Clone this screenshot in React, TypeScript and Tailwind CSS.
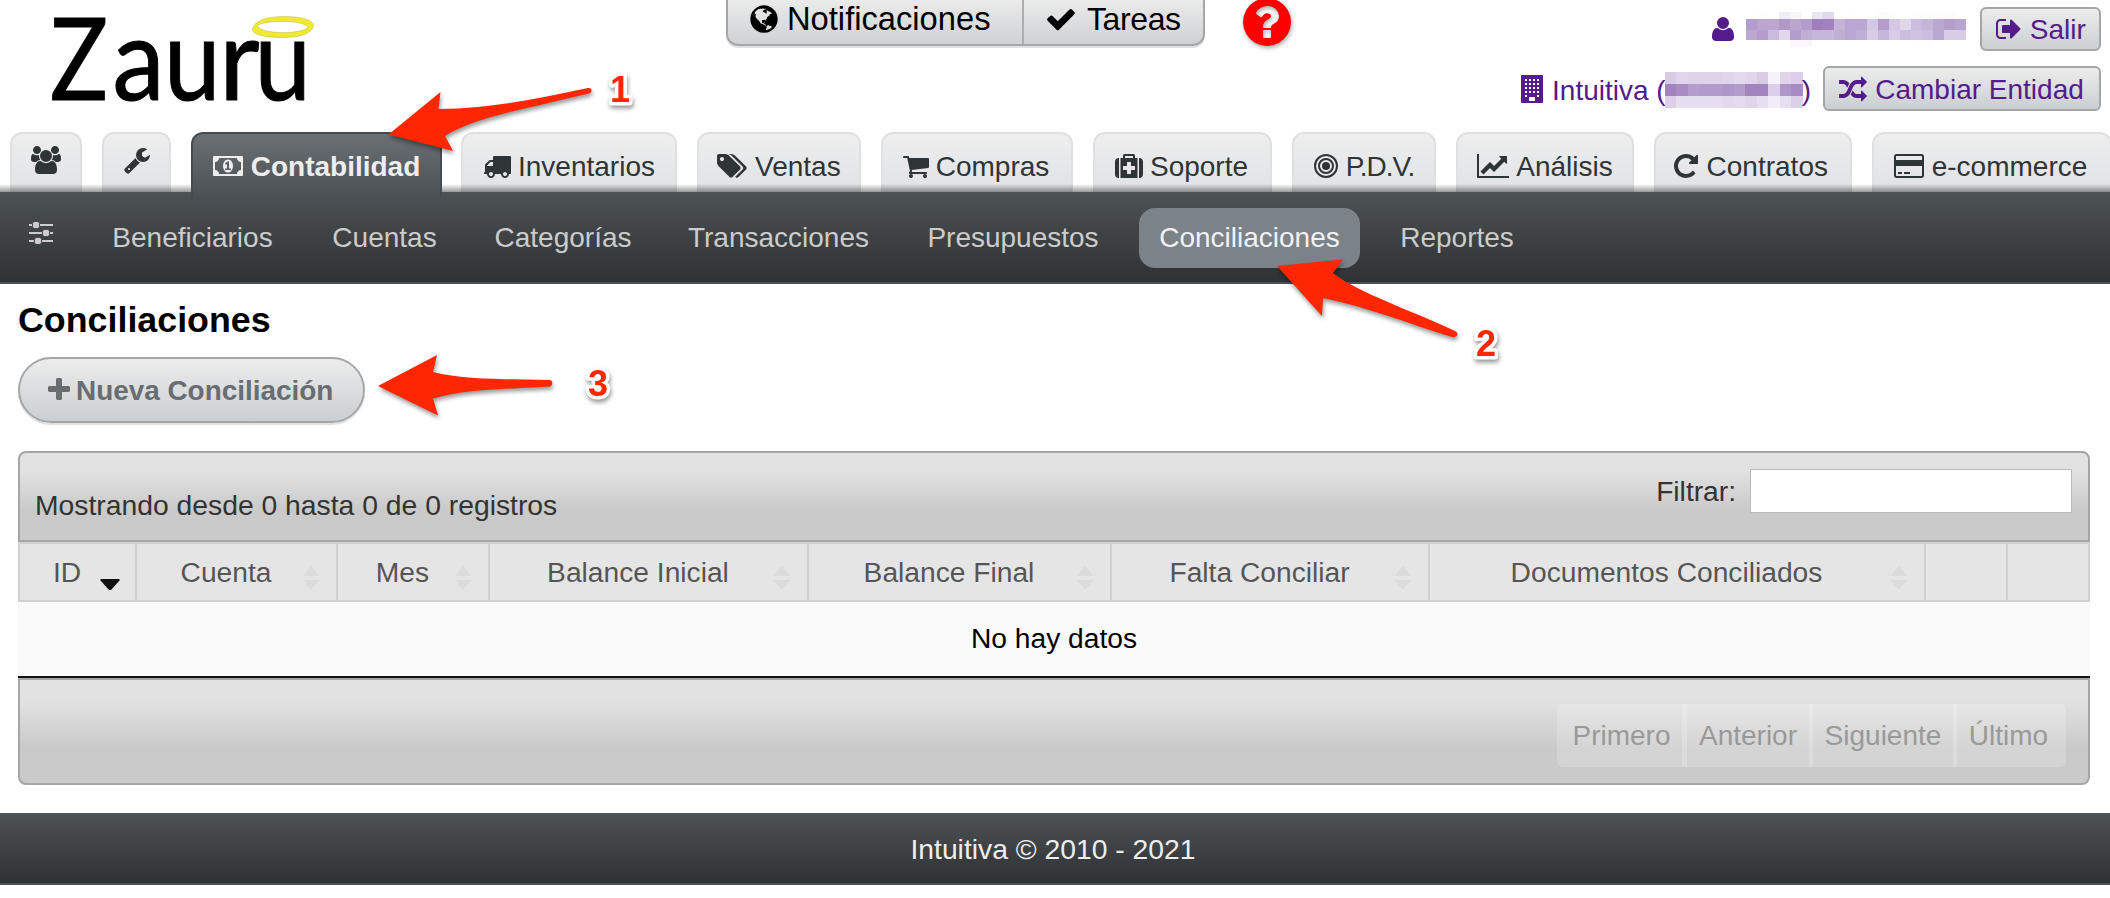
import type { ReactNode } from 'react';
import clsx from 'clsx';

interface GlyphProps {
  d: string;
  width?: number;
  className?: string;
}

function Glyph({ d, width = 1792, className = 'h-7' }: GlyphProps) {
  return (
    <svg viewBox={`0 0 ${width} 1792`} fill="currentColor" className={clsx('shrink-0 overflow-visible', className)}>
      <path d={d} />
    </svg>
  );
}

const glyphs = {
  users:
    'M593 896q-162 5-265 128h-134q-82 0-138-40.5t-56-118.5q0-353 124-353 6 0 43.5 21t97.5 42.5 119 21.5q67 0 133-23-5 37-5 66 0 139 81 256zm1071 637q0 120-73 189.5t-194 69.5h-874q-121 0-194-69.5t-73-189.5q0-53 3.5-103.5t14-109 26.5-108.5 43-97.5 62-81 85.5-53.5 111.5-20q10 0 43 21.5t73 48 107 48 135 21.5 135-21.5 107-48 73-48 43-21.5q61 0 111.5 20t85.5 53.5 62 81 43 97.5 26.5 108.5 14 109 3.5 103.5zm-1024-1277q0 106-75 181t-181 75-181-75-75-181 75-181 181-75 181 75 75 181zm704 384q0 159-112.5 271.5t-271.5 112.5-271.5-112.5-112.5-271.5 112.5-271.5 271.5-112.5 271.5 112.5 112.5 271.5zm576 225q0 78-56 118.5t-138 40.5h-134q-103-123-265-128 81-117 81-256 0-29-5-66 66 23 133 23 59 0 119-21.5t97.5-42.5 43.5-21q124 0 124 353zm-128-609q0 106-75 181t-181 75-181-75-75-181 75-181 181-75 181 75 75 181z',
  wrench:
    'M448 1472q0-26-19-45t-45-19-45 19-19 45 19 45 45 19 45-19 19-45zm644-420l-682 682q-37 37-90 37-52 0-91-37l-106-108q-38-36-38-90 0-53 38-91l681-681q39 98 114.5 173.5t173.5 114.5zm634-435q0 39-23 106-47 134-164.5 217.5t-258.5 83.5q-185 0-316.5-131.5t-131.5-316.5 131.5-316.5 316.5-131.5q58 0 121.5 16.5t107.5 46.5q16 11 16 28t-16 28l-293 169v224l193 107q5-3 79-48.5t135.5-81 70.5-35.5q15 0 23.5 10t8.5 25z',
  money:
    'M768 1152h384v-96h-128v-448h-114l-148 137 77 80q42-37 55-57h2v288h-128v96zm512-256q0 70-21 142t-59.5 134-101.5 101-138 39-138-39-101.5-101-59.5-134-21-142 21-142 59.5-134 101.5-101 138-39 138 39 101.5 101 59.5 134 21 142zm512 256v-512q-106 0-181-75t-75-181h-1152q0 106-75 181t-181 75v512q106 0 181 75t75 181h1152q0-106 75-181t181-75zm128-832v1152q0 26-19 45t-45 19h-1792q-26 0-45-19t-19-45v-1152q0-26 19-45t45-19h1792q26 0 45 19t19 45z',
  truck:
    'M640 1408q0-52-38-90t-90-38-90 38-38 90 38 90 90 38 90-38 38-90zm-384-512h384v-256h-158q-13 0-22 9l-195 195q-9 9-9 22v30zm1280 512q0-52-38-90t-90-38-90 38-38 90 38 90 90 38 90-38 38-90zm256-1088v1024q0 15-4 26.5t-13.5 18.5-16.5 11.5-23.5 6-22.5 2-25.5 0-22.5-.5q0 106-75 181t-181 75-181-75-75-181h-384q0 106-75 181t-181 75-181-75-75-181h-64q-3 0-22.5.5t-25.5 0-22.5-2-23.5-6-16.5-11.5-13.5-18.5-4-26.5q0-26 19-45t45-19v-320q0-8-.5-35t0-38 2.5-34.5 6.5-37 14-30.5 22.5-30l198-198q19-19 50.5-32t58.5-13h160v-192q0-26 19-45t45-19h1024q26 0 45 19t19 45z',
  tags: 'M384 448q0-53-37.5-90.5t-90.5-37.5-90.5 37.5-37.5 90.5 37.5 90.5 90.5 37.5 90.5-37.5 37.5-90.5zm1067 576q0 53-37 90l-491 492q-39 37-91 37-53 0-90-37l-715-716q-38-37-64.5-101t-26.5-117v-416q0-52 38-90t90-38h416q53 0 117 26.5t102 64.5l715 714q37 39 37 91zm384 0q0 53-37 90l-491 492q-39 37-91 37-36 0-59-14t-53-45l470-470q37-37 37-90 0-52-37-91l-715-714q-38-38-102-64.5t-117-26.5h224q53 0 117 26.5t102 64.5l715 714q37 39 37 91z',
  cart: 'M704 1536q0 52-38 90t-90 38-90-38-38-90 38-90 90-38 90 38 38 90zm896 0q0 52-38 90t-90 38-90-38-38-90 38-90 90-38 90 38 38 90zm128-1088v512q0 24-16.5 42.5t-40.5 21.5l-1044 122q13 60 13 70 0 16-24 64h920q26 0 45 19t19 45-19 45-45 19h-1024q-26 0-45-19t-19-45q0-11 8-31.5t16-36 21.5-40 15.5-29.5l-177-823h-204q-26 0-45-19t-19-45 19-45 45-19h256q16 0 28.5 6.5t19.5 15.5 13 24.5 8 26 5.5 29.5 4.5 26h1201q26 0 45 19t19 45z',
  medkit:
    'M1280 1120v-192q0-14-9-23t-23-9h-224v-224q0-14-9-23t-23-9h-192q-14 0-23 9t-9 23v224h-224q-14 0-23 9t-9 23v192q0 14 9 23t23 9h224v224q0 14 9 23t23 9h192q14 0 23-9t9-23v-224h224q14 0 23-9t9-23zm-640-736h512v-128h-512v128zm-384 0v1280h-32q-92 0-158-66t-66-158v-832q0-92 66-158t158-66h32zm1184 0v1280h-1088v-1280h160v-160q0-40 28-68t68-28h576q40 0 68 28t28 68v160h160zm352 224v832q0 92-66 158t-158 66h-32v-1280h32q92 0 158 66t66 158z',
  chart:
    'M2048 1536v128h-2048v-1536h128v1408h1920zm-128-1248v435q0 21-19.5 29.5t-35.5-7.5l-121-121-633 633q-10 10-23 10t-23-10l-233-233-416 416-192-192 585-585q10-10 23-10t23 10l233 233 464-464-121-121q-16-16-7.5-35.5t29.5-19.5h435q14 0 23 9t9 23z',
  repeat:
    'M1664 256v448q0 26-19 45t-45 19h-448q-42 0-59-40-17-39 14-69l138-138q-148-137-349-137-104 0-198.5 40.5t-163.5 109.5-109.5 163.5-40.5 198.5 40.5 198.5 109.5 163.5 163.5 109.5 198.5 40.5q119 0 225-52t179-147q7-10 23-12 15 0 25 9l137 138q9 8 9.5 20.5t-7.5 22.5q-109 132-264 204.5t-327 72.5q-156 0-298-61t-245-164-164-245-61-298 61-298 164-245 245-164 298-61q147 0 284.5 55.5t244.5 156.5l130-129q29-31 70-14 39 17 39 59z',
  card: 'M1760 128q66 0 113 47t47 113v1216q0 66-47 113t-113 47h-1600q-66 0-113-47t-47-113v-1216q0-66 47-113t113-47h1600zm-1600 128q-13 0-22.5 9.5t-9.5 22.5v224h1664v-224q0-13-9.5-22.5t-22.5-9.5h-1600zm1600 1280q13 0 22.5-9.5t9.5-22.5v-608h-1664v608q0 13 9.5 22.5t22.5 9.5h1600zm-1504-128v-128h256v128h-256zm384 0v-128h384v128h-384z',
  user: 'M1600 1405q0 120-73 189.5t-194 69.5h-874q-121 0-194-69.5t-73-189.5q0-53 3.5-103.5t14-109 26.5-108.5 43-97.5 62-81 85.5-53.5 111.5-20q9 0 42 21.5t74.5 48 108 48 133.5 21.5 133.5-21.5 108-48 74.5-48 42-21.5q61 0 111.5 20t85.5 53.5 62 81 43 97.5 26.5 108.5 14 109 3.5 103.5zm-320-893q0 159-112.5 271.5t-271.5 112.5-271.5-112.5-112.5-271.5 112.5-271.5 271.5-112.5 271.5 112.5 112.5 271.5z',
  signOut:
    'M704 1440q0 4 1 20t.5 26.5-3 23.5-10 19.5-20.5 6.5h-320q-119 0-203.5-84.5t-84.5-203.5v-704q0-119 84.5-203.5t203.5-84.5h320q13 0 22.5 9.5t9.5 22.5q0 4 1 20t.5 26.5-3 23.5-10 19.5-20.5 6.5h-320q-66 0-113 47t-47 113v704q0 66 47 113t113 47h312l11.5 1 11.5 3 8 5.5 7 9 2 13.5zm928-544q0 26-19 45l-544 544q-19 19-45 19t-45-19-19-45v-288h-448q-26 0-45-19t-19-45v-384q0-26 19-45t45-19h448v-288q0-26 19-45t45-19 45 19l544 544q19 19 19 45z',
  random:
    'M666 481q-60 92-137 273-22-45-37-72.5t-40.5-63.5-51-56.5-63-35-81.5-14.5h-224q-14 0-23-9t-9-23v-192q0-14 9-23t23-9h224q250 0 410 225zm1126 799q0 14-9 23l-320 320q-9 9-23 9-13 0-22.5-9.5t-9.5-22.5v-192q-32 0-85 .5t-81 1-73-1-71-5-64-10.5-63-18.5-58-28.5-59-40-55-53.5-56-69.5q59-93 136-273 22 45 37 72.5t40.5 63.5 51 56.5 63 35 81.5 14.5h256v-192q0-14 9-23t23-9q12 0 24 10l319 319q9 9 9 23zm0-896q0 14-9 23l-320 320q-9 9-23 9-13 0-22.5-9.5t-9.5-22.5v-192h-256q-48 0-87 15t-69 45-51 61.5-45 77.5q-32 62-78 171-29 66-49.5 111t-54 105-64 100-74 83-90 68.5-106.5 42-128 16.5h-224q-14 0-23-9t-9-23v-192q0-14 9-23t23-9h224q48 0 87-15t69-45 51-61.5 45-77.5q32-62 78-171 29-66 49.5-111t54-105 64-100 74-83 90-68.5 106.5-42 128-16.5h256v-192q0-14 9-23t23-9q12 0 24 10l319 319q9 9 9 23z',
  check:
    'M1671 566q0 40-28 68l-724 724-136 136q-28 28-68 28t-68-28l-136-136-362-362q-28-28-28-68t28-68l136-136q28-28 68-28t68 28l294 295 656-657q28-28 68-28t68 28l136 136q28 28 28 68z',
  plus: 'M1600 736v192q0 40-28 68t-68 28h-416v416q0 40-28 68t-68 28h-192q-40 0-68-28t-28-68v-416h-416q-40 0-68-28t-28-68v-192q0-40 28-68t68-28h416v-416q0-40 28-68t68-28h192q40 0 68 28t28 68v416h416q40 0 68 28t28 68z',
  question:
    'M1024 1376v-192q0-14-9-23t-23-9h-192q-14 0-23 9t-9 23v192q0 14 9 23t23 9h192q14 0 23-9t9-23zm256-672q0-88-55.5-163t-138.5-116-170-41q-243 0-371 213-15 24 8 42l132 100q7 6 19 6 16 0 25-12 53-68 86-92 34-24 86-24 48 0 85.5 26t37.5 59q0 38-20 61t-68 45q-63 28-115.5 86.5t-52.5 125.5v36q0 14 9 23t23 9h192q14 0 23-9t9-23q0-19 21.5-49.5t54.5-49.5q32-18 49-28.5t46-35 44.5-48 28-60.5 12.5-81zm384 192q0 209-103 385.5t-279.5 279.5-385.5 103-385.5-103-279.5-279.5-103-385.5 103-385.5 279.5-279.5 385.5-103 385.5 103 279.5 279.5 103 385.5z',
  globe:
    'M896 128q209 0 385.5 103t279.5 279.5 103 385.5-103 385.5-279.5 279.5-385.5 103-385.5-103-279.5-279.5-103-385.5 103-385.5 279.5-279.5 385.5-103zm274 521q-2 1-9.5 9.5t-13.5 9.5q2 0 4.5-5t5-11 3.5-7q6-7 22-15 14-6 52-12 34-8 51 11-2-2 9.5-13t14.5-12q3-2 15-4.5t15-7.5l2-22q-12 1-17.5-7t-6.5-21q0 2-6 8 0-7-4.5-8t-11.5 1-9 1q-10-3-15-7.5t-8-16.5-4-15q-2-5-9.5-11t-9.5-10q-1-2-2.5-5.5t-3-6.5-4-5.5-5.5-2.5-7 5-7.5 10-4.5 5q-3-2-6-1.5t-4.5 1-4.5 3-5 3.5q-3 2-8.5 3t-8.5 2q15-5-1-11-10-4-16-3 9-4 7.5-12t-8.5-14h5q-1-4-8.5-8.5t-17.5-8.5-13-6q-8-5-34-9.5t-33-.5q-5 6-4.5 10.5t4 14 3.5 12.5q1 6-5.5 13t-6.5 12q0 7 14 15.5t10 21.5q-3 8-16 16t-16 12q-5 8-1.5 18.5t10.5 16.5q2 2 1.5 4t-3.5 4.5-5.5 4-6.5 3.5l-3 2q-11 5-20.5-6t-13.5-26q-7-25-16-30-23-8-29 1-5-13-41-26-25-9-58-4 6-1 0-15-7-15-19-12 3-6 4-17.5t1-13.5q3-13 12-23 1-1 7-8.5t9.5-13.5.5-6q35 4 50-11 5-5 11.5-17t10.5-17q9-6 14-5.5t14.5 5.5 14.5 5q14 1 15.5-11t-7.5-20q12 1 3-17-5-7-8-9-12-4-27 5-8 4 2 8-1-1-9.5 10.5t-16.5 17.5-16-5q-1-1-5.5-13.5t-9.5-13.5q-8 0-16 15 3-8-11-15t-24-8q19-12-8-27-7-4-20.5-5t-19.5 4q-5 7-5.5 11.5t5 8 10.5 5.5 11.5 4 8.5 3q14 10 8 14-2 1-8.5 3.5t-11.5 4.5-6 4q-3 4 0 14t-2 14q-5-5-9-17.5t-7-16.5q7 9-25 6l-10-1q-4 0-16 2t-20.5 1-13.5-8q-4-8 0-20 1-4 4-2-4-3-11-9.5t-10-8.5q-46 15-94 41 6 1 12-1 5-2 13-6.5t10-5.5q34-14 42-7l5-5q14 16 20 25-7-4-30-1-20 6-22 12 7 12 5 18-4-3-11.5-10t-14.5-11-15-5q-16 0-22 1-146 80-235 222 7 7 12 8 4 1 5 9t2.500 11 11.500-3q9 8 3 19 1-1 44 27 19 17 21 21 3 11-10 18-1-2-9-9t-9-4q-3 5 .5 18.500t10.500 12.500q-7 0-9.500 16t-2.500 35.500-1 23.500l2 1q-3 12 5.500 34.500t21.500 19.500q-13 3 20 43 6 8 8 9 3 2 12 7.500t15 10 10 10.500q4 5 10 22.500t14 23.500q-2 6 9.500 20t10.500 23q-1 0-2.500 1t-2.500 1q3 7 15.500 14t15.500 13q1 3 2 10t3 11 8 2q2-20-24-62-15-25-17-29-3-5-5.500-15.500t-4.500-14.500q2 0 6 1.500t8.500 3.500 7.500 4 2 3q-3 7 2 17.500t12 18.500 17 19 12 13q6 6 14 19.500t0 13.500q9 0 20 10.500t17 19.500q5 8 8 26t5 24q2 7 8.500 13.500t12.500 9.500l16 8 13 7q5 2 18.500 10.500t21.500 11.500q10 4 16 4t14.500-2.500 13.500-3.500q15-2 29 15t21 21q36 19 55 11-2 1 .5 7.500t8 15.500 9 14.500 5.500 8.500q5 6 18 15t18 15q6-4 7-9-3 8 7 20t18 10q14-3 14-32-31 15-49-18 0-1-2.500-5.500t-4-8.500-2.500-8.500 0-7.500 5-3q9 0 10-3.500t-2-12.500-4-13q-1-8-11-20t-12-15q-5 9-16 8t-16-9q0 1-1.500 5.500t-1.500 6.500q-13 0-15-1 1-3 2.500-17.500t3.500-22.500q1-4 5.500-12t7.500-14.500 4-12.500-4.500-9.500-17.500-2.500q-19 1-26 20-1 3-3 10.500t-5 11.500-9 7q-7 3-24 2t-24-5q-13-8-22.500-29t-9.500-37q0-10 2.500-26.500t3-25-5.500-24.500q3-2 9-9.500t10-10.500q2-1 4.500-1.500t4.500 0 4-1.500 3-6q-1-1-4-3-3-3-4-3 7 3 28.500-1.500t27.500 1.500q15 11 22-2 0-1-2.500-9.500t-.5-13.500q5 27 29 9 3 3 15.500 5t17.500 5q3 2 7 5.500t5.500 4.500 5-.5 8.500-6.500q10 14 12 24 11 40 19 44 7 3 11 2t4.500-9.500 0-14-1.500-12.500l-1-8v-18l-1-8q-15-3-18.500-12t1.500-18.500 15-18.500q1-1 8-3.500t15.500-6.500 12.500-8q21-19 15-35 7 0 11-9-1 0-5-3t-7.500-5-4.500-2q9-5 2-16 5-3 7.500-11t7.500-10q9 12 21 2 8-8 1-16 5-7 20.500-10.500t18.500-9.500q7 2 8-2t1-12 3-12q4-5 15-9t13-5l17-11q3-4 0-4 18 2 31-11 10-11-6-20 3-6-3-9.500t-15-5.500q3-1 11.500-.5t10.500-1.500q15-10-7-16-17-5-43 12zm-163 877q206-36 351-189-3-3-12.500-4.500t-12.500-3.500q-18-7-24-8 1-7-2.500-13t-8-9-12.500-8-11-7q-2-2-7-6t-7-5.500-7.500-4.500-8.500-2-10 1l-3 1q-3 1-5.500 2.500t-5.500 3-4 3 0 2.500q-21-17-36-22-5-1-11-5.500t-10.500-7-10-1.500-11.500 7q-5 5-6 15t-2 13q-7-5 0-17.500t2-18.500q-3-6-10.500-4.500t-12 4.500-11.500 8.500-9 6.500-8.500 5.500-8.500 7.500q-3 4-6 12t-5 11q-2-4-11.500-6.500t-9.500-5.500q2 10 4 35t5 38q7 31-12 48-27 25-29 40-4 22 12 26 0 7-8 20.500t-7 21.500q0 6 2 16z',
};

function Bullseye() {
  return (
    <svg viewBox="128 0 1536 1792" className="h-7 shrink-0" fill="none" stroke="currentColor" strokeWidth="128">
      <circle cx="896" cy="896" r="256" fill="currentColor" stroke="none" />
      <circle cx="896" cy="896" r="448" />
      <circle cx="896" cy="896" r="704" />
    </svg>
  );
}

function Building() {
  return (
    <svg viewBox="0 0 22 28" className="h-7 w-[22px] shrink-0">
      <rect width="22" height="28" rx="1" fill="#551a8b" />
      {[4, 8, 12, 16, 20].map((y) =>
        [4, 8, 12, 16].map((x) =>
          y === 20 && (x === 8 || x === 12) ? null : (
            <rect key={`${x}-${y}`} x={x} y={y} width="2" height="2" fill="#fff" />
          ),
        ),
      )}
      <rect x="8" y="22" width="6" height="4" fill="#fff" />
    </svg>
  );
}

function Sliders() {
  return (
    <svg viewBox="0 0 24 22" className="h-[22px] w-6 shrink-0" fill="#ccc">
      <path d="M0 2h24v2H0zM0 10h24v2H0zM0 18h24v2H0z" />
      <g stroke="#42464a" strokeWidth="1">
        <rect x="3.5" y="-.5" width="7" height="7" rx="2" />
        <rect x="13.5" y="7.5" width="7" height="7" rx="2" />
        <rect x="5.5" y="15.5" width="7" height="7" rx="2" />
      </g>
    </svg>
  );
}

function Logo() {
  return (
    <svg viewBox="0 0 340 120" className="h-[120px] w-[340px] shrink-0">
      <g fontFamily="Lato, sans-serif" fontSize="115" fill="#000" stroke="#000" strokeWidth="1">
        <text transform="translate(50 99.5) scale(.84 1)">Z</text>
        <text transform="translate(112.5 99.5) scale(.91 1)">a</text>
        <text transform="translate(164 99.5) scale(.88 1)">u</text>
        <text transform="translate(219 99.5) scale(.97 1)">r</text>
        <text transform="translate(254.500 99.5) scale(.88 1)">u</text>
      </g>
      <path
        fill="#f1ea2b"
        stroke="#a8a45a"
        strokeOpacity=".5"
        strokeWidth=".8"
        fillRule="evenodd"
        d="M252.500 30C253 19 272 16.500 284 16.500c16 0 28 3 29.500 8.500-1 9-14 12.500-31 12.500-17 0-29-2.500-30-7.500zM257.500 26c2 4 12 6.500 25 6.500 12 0 21-1.500 25.500-5-2-4-12-6-25-6-14 0-23 1.500-25.500 4.500z"
      />
    </svg>
  );
}

interface Tab {
  label: string;
  size: string;
  icon: ReactNode;
  active?: boolean;
}

const tabs: Tab[] = [
  { label: 'Contabilidad', size: 'w-[251px] gap-[8px]', icon: <Glyph d={glyphs.money} width={1920} />, active: true },
  { label: 'Inventarios', size: 'w-[216px] gap-[7px] -ml-px', icon: <Glyph d={glyphs.truck} /> },
  { label: 'Ventas', size: 'w-[164px] gap-[8px] pl-px', icon: <Glyph d={glyphs.tags} width={1835} /> },
  { label: 'Compras', size: 'w-[192px] gap-[6px] pr-[3px]', icon: <Glyph d={glyphs.cart} /> },
  { label: 'Soporte', size: 'w-[179px] gap-[7px] pr-[2px]', icon: <Glyph d={glyphs.medkit} /> },
  { label: 'P.D.V.', size: 'w-[144px] gap-[8px] tracking-[-1px]', icon: <Bullseye /> },
  { label: 'Análisis', size: 'w-[178px] gap-[7px]', icon: <Glyph d={glyphs.chart} width={2048} /> },
  { label: 'Contratos', size: 'w-[198px] gap-[8px] pr-[6px]', icon: <Glyph d={glyphs.repeat} width={1700} /> },
  { label: 'e-commerce', size: 'w-[240px] gap-[8px] pr-[3px]', icon: <Glyph d={glyphs.card} width={1920} /> },
];

const sections = [
  { label: 'Beneficiarios', width: 'w-[201px]' },
  { label: 'Cuentas', width: 'w-[143px]' },
  { label: 'Categorías', width: 'w-[174px]' },
  { label: 'Transacciones', width: 'w-[217px]' },
  { label: 'Presupuestos', width: 'w-[212px]' },
  { label: 'Conciliaciones', width: 'w-[221px]', active: true },
  { label: 'Reportes', width: 'w-[154px]' },
];

const columns = [
  { label: 'ID', width: 'w-[117px]', sorted: true },
  { label: 'Cuenta', width: 'w-[201px]' },
  { label: 'Mes', width: 'w-[152px]' },
  { label: 'Balance Inicial', width: 'w-[319px]' },
  { label: 'Balance Final', width: 'w-[303px]' },
  { label: 'Falta Conciliar', width: 'w-[318px]' },
  { label: 'Documentos Conciliados', width: 'w-[496px]' },
  { label: '', width: 'w-[82px]' },
  { label: '', width: 'w-[82px]' },
];

const nameMosaic = [
  '#fff #fdfcfe #fff #f1edf6 #f7f5fa #fff #ece6f2 #e2d9ec #fff #fefefe #fff #fff #fbfafc #fefefe #fff #fdfcfd #fdfcfd #fdfcfd #fdfcfd #fff',
  '#b39dcc #bba6d0 #bba6d0 #b099c9 #bba6d0 #b39dcc #a07dbc #a182be #c4b2d8 #b9a6d2 #b9a6d2 #d4c7e3 #b39dcc #d3c7e3 #e1d7eb #cbbddd #c5b5d8 #baa7d1 #b49fcc #baa7d1',
  '#bda7d1 #b39dcc #cabbdc #e2d8ec #b39dcc #c1aed5 #c6b6d9 #c6b6d9 #c0aed5 #b9a6d2 #c0aed5 #d8cce6 #c6b6d9 #d8cce6 #cbbddd #cfc1df #cbbddd #baa7d1 #d8cce6 #d8cce6',
  '#fff #fff #fff #fff #faf8fb #faf8fb #fff #fff #fff #fff #fff #fff #fff #fff #fff #fefefe #fefefe #fff #fff #fff',
];

const entityMosaic = [
  '#d8cce5 #e0d5ea #ddd2e8 #ddd2e8 #ddd2e8 #dfd4e9 #e2d9ec #e0d5ea #d8cce5 #f5f3f9 #dfd4e9 #dbd0e7',
  '#a283be #aa8cc3 #b29dcb #b19bca #b19bca #ae96c8 #b29dcb #a283be #a283be #dacfe6 #ae96c8 #a88bc2',
  '#dccfe7 #e5deef #e5deef #e5deef #e5deef #e2d9ec #e4dcee #dfd6ea #e6dff0 #f1edf6 #e6dff0 #dccfe7',
];

function Mosaic({ rows, heights }: { rows: string[]; heights: string[] }) {
  return (
    <div className="flex h-full w-full flex-col">
      {rows.map((row, r) => (
        <div key={r} className={clsx('flex w-full', heights[r])}>
          {row.split(' ').map((color, i) => (
            <span key={i} className="flex-1" style={{ backgroundColor: color }} />
          ))}
        </div>
      ))}
    </div>
  );
}

function SmallButton({ children, className }: { children: ReactNode; className: string }) {
  return (
    <button
      className={clsx(
        'flex shrink-0 items-center justify-center rounded-md border-2 border-[#a6a6a6] bg-linear-to-b from-[#ececec] to-[#cbcfd1] whitespace-nowrap',
        className,
      )}
    >
      {children}
    </button>
  );
}

function Header() {
  return (
    <header className="flex h-[132px] items-start">
      <Logo />
      <div className="ml-[386px] flex h-[46px] w-[479px] shrink-0 rounded-b-xl border-x-2 border-b-2 border-[#a6a6a6] bg-linear-to-b from-[#ebebeb] to-[#cfd1d3] leading-8 text-black shadow-[0_2px_0_#e2e2e2]">
        <div className="flex w-[296px] items-start border-r-2 border-[#adadad] pt-[3px] pl-5 text-[32.7px]">
          <Glyph d={glyphs.globe} className="h-8" />
          <span className="ml-[7px]">Notificaciones</span>
        </div>
        <div className="flex items-start pt-[3px] pl-[21px] text-[32px] tracking-[-0.4px]">
          <Glyph d={glyphs.check} className="h-8" />
          <span className="ml-[10px]">Tareas</span>
        </div>
      </div>
      <div className="-mt-1.5 ml-[34px] shrink-0 text-[#fe0000] drop-shadow-[1px_2px_2px_rgba(0,0,0,0.35)]">
        <Glyph d={glyphs.question} className="h-14" />
      </div>
      <div className="mt-[7px] mr-[9px] ml-auto flex flex-col items-end gap-[15px] text-[28px] leading-7 text-[#551a8b]">
        <div className="flex h-11 items-center">
          <Glyph d={glyphs.user} className="mr-[5px] h-7" />
          <div className="mr-[9px] flex h-9 w-[229px] pt-px pr-[5px] pl-1">
            <Mosaic rows={nameMosaic} heights={['h-[7px]', 'h-[11px]', 'h-[11px]', 'h-[7px]']} />
          </div>
          <SmallButton className="h-11 w-[121px] gap-2">
            <Glyph d={glyphs.signOut} width={1700} />
            <span className="pt-0.5">Salir</span>
          </SmallButton>
        </div>
        <div className="flex h-[45px] items-center">
          <Building />
          <span className="ml-[9px] pt-1 whitespace-nowrap">Intuitiva (</span>
          <div className="mt-[3px] -ml-px h-9 w-[138px]">
            <Mosaic rows={entityMosaic} heights={['h-3', 'h-3', 'h-3']} />
          </div>
          <span className="mr-[12px] -ml-px pt-1">)</span>
          <SmallButton className="h-[45px] w-[278px] gap-2 pr-px">
            <Glyph d={glyphs.random} className="mt-0.5 h-7" />
            <span className="pt-0.5">Cambiar Entidad</span>
          </SmallButton>
        </div>
      </div>
    </header>
  );
}

function TabBar() {
  return (
    <nav className="relative flex h-[60px] gap-5 pl-2.5 text-[28px] leading-7 text-[#2f3436]">
      <div className="flex w-[72px] shrink-0 justify-center rounded-t-xl border-2 border-b-0 border-[#dfe1e1] bg-linear-to-b from-[#eeeeee] to-[#e0e2e4] pt-3">
        <Glyph d={glyphs.users} width={1920} />
      </div>
      <div className="flex w-[69px] shrink-0 justify-center rounded-t-xl border-2 border-b-0 border-[#dfe1e1] bg-linear-to-b from-[#eeeeee] to-[#e0e2e4] pt-3">
        <Glyph d={glyphs.wrench} />
      </div>
      {tabs.map((tab) => (
        <div
          key={tab.label}
          className={clsx(
            'flex shrink-0 justify-center rounded-t-xl border-2 border-b-0 bg-linear-to-b pt-[18px] whitespace-nowrap',
            tab.size,
            tab.active
              ? 'z-10 h-[66px] border-[#464b4f] from-[#6b7074] to-[#4b5054] font-bold text-[#eee]'
              : 'border-[#dfe1e1] from-[#eeeeee] to-[#e0e2e4]',
          )}
        >
          {tab.icon}
          <span className="pt-px">{tab.label}</span>
        </div>
      ))}
      <div className="absolute inset-x-0 bottom-0 h-2 bg-linear-to-b from-black/0 to-black/40" />
    </nav>
  );
}

function SectionBar() {
  return (
    <nav className="flex h-[92px] items-start gap-5 border-b-2 border-[#4b5156] bg-linear-to-b from-[#4d5255] to-[#2f3235] pt-4 pl-[29px] text-center text-[28px] leading-7 text-[#ccc]">
      <div className="mr-[19px] pt-3.5">
        <Sliders />
      </div>
      {sections.map((section) => (
        <a
          key={section.label}
          className={clsx('h-[60px] rounded-2xl pt-4', section.width, section.active && 'bg-[#7b8288] text-[#f2f2f2]')}
        >
          {section.label}
        </a>
      ))}
    </nav>
  );
}

function SortMark({ sorted }: { sorted?: boolean }) {
  if (sorted) {
    return (
      <svg viewBox="0 0 20 24" className="absolute right-[15px] bottom-2.5 h-6 w-5">
        <path d="M.5 13h19v1.5L11 24H9L.5 14.5z" fill="#111" />
      </svg>
    );
  }
  return (
    <svg viewBox="0 0 18 24" className="absolute right-[16px] bottom-2.5 h-6 w-[18px]" fill="#dbdbdb">
      <path d="M9 0l8.5 10H.5zM9 24l8.5-10H.5z" />
    </svg>
  );
}

function DataTable() {
  return (
    <div className="mx-[18px] mt-7 w-[2072px] text-[28.2px] leading-7">
      <div className="flex h-[91px] justify-between rounded-t-lg border-2 border-[#a6a6a6] bg-linear-to-b from-[#e2e2e2] from-20% to-[#cacaca] to-65% text-[#333]">
        <div className="pt-[38px] pl-[15px] text-[28.3px]">Mostrando desde 0 hasta 0 de 0 registros</div>
        <label className="flex items-start pt-4 pr-4">
          <span className="pt-2">Filtrar:</span>
          <input className="ml-[14px] h-11 w-[322px] border border-[#bbb] bg-white" />
        </label>
      </div>
      <div className="flex h-[60px] border-y-2 border-l-2 border-[#d0d0d0] bg-[#e5e5e5] text-[#555]">
        {columns.map((column, i) => (
          <div
            key={i}
            className={clsx(
              'relative shrink-0 border-r-2 border-[#d0d0d0] pt-3.5 pr-[21px] text-center whitespace-nowrap',
              column.width,
            )}
          >
            {column.label}
            {column.label && <SortMark sorted={column.sorted} />}
          </div>
        ))}
      </div>
      <div className="h-[76px] border-b-2 border-[#111] bg-[#f9f9f9] pt-[22px] text-center text-black">
        No hay datos
      </div>
      <div className="flex h-[107px] items-start justify-end rounded-b-lg border-2 border-[#a6a6a6] bg-linear-to-b from-[#e2e2e2] from-20% to-[#cacaca] to-65% pt-6 pr-[22px] text-[28px] text-[#999]">
        <div className="flex h-[63px] overflow-hidden rounded-md bg-white/20 text-center leading-[64px]">
          <span className="w-[130px] border-r-[5px] border-white/20 pl-1">Primero</span>
          <span className="w-[126px] border-r-4 border-white/20">Anterior</span>
          <span className="w-[144px] border-r-4 border-white/20">Siguiente</span>
          <span className="w-[109px] pr-1.5">Último</span>
        </div>
      </div>
    </div>
  );
}

// Numbered guide arrows laid over the page
function Callouts() {
  return (
    <svg
      viewBox="0 0 2110 898"
      className="pointer-events-none absolute inset-0 z-20 h-[898px] w-[2110px] drop-shadow-[1px_3px_2px_rgba(0,0,0,0.4)]"
      fill="#ff2600"
    >
      <path d="M388.5 134.5L440.5 92l-2 17C490 109 540 98 588 88c4-.5 5 4 1 5.5C530 108 475 117 445 136l8 15z" />
      <path d="M1277 266l66-6.500-10 13.500c25 20 85 40 123 58.500 3 3 1 6-4 5.500-45-14-88-31-129-39l-1 18z" />
      <path d="M378 386l59-31-4 17c30 8 75 7 117 8 3 1 3 5 0 6.500-40 2.500-86 2.500-117 12l5 17z" />
      <g
        fontFamily="Liberation Sans, sans-serif"
        fontWeight="bold"
        fontSize="36"
        stroke="#fff"
        strokeWidth="7"
        strokeLinejoin="round"
        paintOrder="stroke"
      >
        <text x="610" y="101.5">1</text>
        <text x="1476" y="355.5">2</text>
        <text x="588" y="395.5">3</text>
      </g>
    </svg>
  );
}

export default function App() {
  return (
    <div className="relative h-[898px] w-[2110px] overflow-hidden bg-white font-['Liberation_Sans',Arial,sans-serif]">
      <Header />
      <TabBar />
      <SectionBar />
      <main>
        <h1 className="mt-[18px] ml-[18px] text-[35.8px] leading-9 font-bold text-black">Conciliaciones</h1>
        <button className="mt-[19px] ml-[18px] flex h-[66px] w-[347px] items-center rounded-[33px] border-2 border-[#a6a6a6] bg-linear-to-b from-[#ececec] to-[#cbcfd1] pl-[25px] text-[27.9px] leading-7 font-bold whitespace-nowrap text-[#676d71] shadow-[0_2px_1px_#e0e0e0]">
          <Glyph d={glyphs.plus} />
          <span className="ml-[3px] pt-0.5">Nueva Conciliación</span>
        </button>
        <DataTable />
      </main>
      <footer className="mt-7 h-[72px] border-b-2 border-[#4b5156] bg-linear-to-b from-[#4d5255] to-[#2f3235] pt-[22px] pr-1 text-center text-[28.3px] leading-7 text-[#eee]">
        Intuitiva © 2010 - 2021
      </footer>
      <Callouts />
    </div>
  );
}
